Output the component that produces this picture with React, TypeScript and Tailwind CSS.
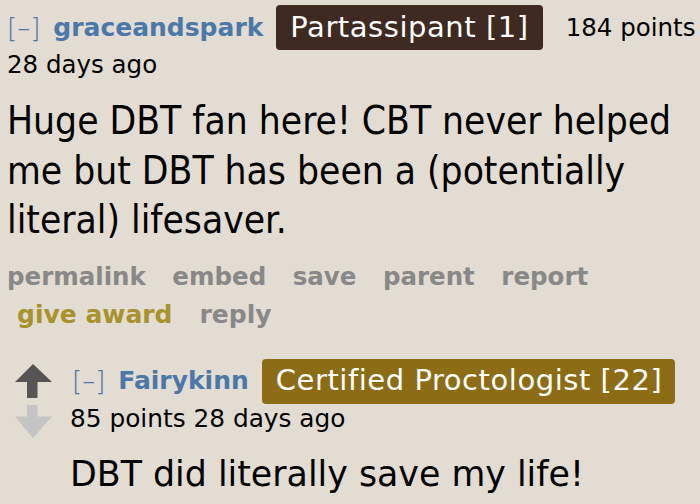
import React from "react";

export default function App() {
  const font = { fontFamily: '"DejaVu Sans", Verdana, sans-serif' };
  const cond = { fontFamily: '"DejaVu Sans Condensed", "DejaVu Sans", Verdana, sans-serif' };
  return (
    <div className="w-[700px] h-[504px] overflow-hidden bg-[#e3dcd2] text-black" style={font}>
      <div className="pl-[7px] pt-[5px]">
        <div className="flex items-center h-[45px]">
          <span className="text-[#4b78a8] text-[26px] leading-[30px] font-light">[–]</span>
          <span className="ml-[13px] text-[#4b78a8] text-[25px] leading-[30px] font-bold">graceandspark</span>
          <span className="ml-[13px] bg-[#3e2a21] text-white rounded-[4px] pl-[14px] pr-[14px] h-[45px] flex items-center text-[29px] tracking-[0.55px]">Partassipant [1]</span>
          <span className="ml-[23px] text-[24.5px] leading-[30px]">184 points</span>
        </div>
        <div className="text-[24.5px] leading-[30px]">28 days ago</div>
        <div className="mt-[16px] text-[38.6px] leading-[49.5px] w-[690px] font-stretch-condensed" style={cond}>
          Huge DBT fan here! CBT never helped me but DBT has been a (potentially literal) lifesaver.
        </div>
        <div className="mt-[17px] text-[24.5px] leading-[30px] font-bold text-[#888888] flex gap-[26.5px]">
          <span>permalink</span><span>embed</span><span>save</span><span>parent</span><span>report</span>
        </div>
        <div className="mt-[8px] ml-[10px] text-[25px] leading-[30px] font-bold flex gap-[27px]">
          <span className="text-[#a8922b]">give award</span><span className="text-[#888888]">reply</span>
        </div>
        <div className="mt-[29px] flex">
          <div className="w-[63px] shrink-0 pl-[8px] pt-[5px]">
            <svg width="37" height="76" viewBox="0 0 37 76">
              <polygon points="18,0 37,18 22.5,18 22.5,34 12,34 12,18 0,18" fill="#555555" />
              <polygon points="12,41 22.5,41 22.5,52.5 37,52.5 18,74 0,52.5 12,52.5" fill="#c4c4c4" />
            </svg>
          </div>
          <div className="flex flex-col">
            <div className="flex items-center h-[45px]">
              <span className="ml-[2px] text-[#4b78a8] text-[26px] leading-[30px] font-light">[–]</span>
              <span className="ml-[13px] text-[#4b78a8] text-[25px] leading-[30px] font-bold">Fairykinn</span>
              <span className="ml-[13px] bg-[#8c6d15] text-white rounded-[4px] pl-[14px] pr-[13px] h-[45px] flex items-center text-[29px] tracking-[0.55px]">Certified Proctologist [22]</span>
            </div>
            <div className="text-[24.8px] leading-[30px]">85 points 28 days ago</div>
            <div className="mt-[20px] text-[34.8px] leading-[40px]">DBT did literally save my life!</div>
          </div>
        </div>
      </div>
    </div>
  );
}
